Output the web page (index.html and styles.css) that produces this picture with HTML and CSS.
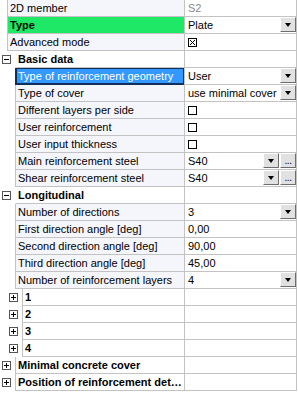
FILE: index.html
```html
<!DOCTYPE html>
<html lang="en">
<head>
  <meta charset="UTF-8">
  <title>2D member properties</title>
  <link rel="stylesheet" href="styles.css">
</head>
<body>
  <div class="grid">
    <div class="row lvl0">
      <div class="gutter"></div>
      <div class="name">2D member</div>
      <div class="value"><span class="readonly">S2</span></div>
    </div>
    <div class="row lvl0">
      <div class="gutter"></div>
      <div class="name type">Type</div>
      <div class="value"><span class="text">Plate</span><span class="drop"></span></div>
    </div>
    <div class="row lvl0">
      <div class="gutter"></div>
      <div class="name">Advanced mode</div>
      <div class="value">
        <svg class="check" width="9" height="9" viewBox="0 0 9 9"><rect x="0.5" y="0.5" width="8" height="8" fill="#fff" stroke="#000"/><path d="M2 2L7 7M7 2L2 7" stroke="#000" stroke-width="1"/></svg>
      </div>
    </div>

    <div class="row lvl1 group open">
      <div class="gutter"><span class="toggle minus"></span></div>
      <div class="name">Basic data</div>
      <div class="value"></div>
    </div>
    <div class="row lvl1">
      <div class="gutter"></div>
      <div class="name selected">Type of reinforcement geometry</div>
      <div class="value"><span class="text">User</span><span class="drop"></span></div>
    </div>
    <div class="row lvl1">
      <div class="gutter"></div>
      <div class="name">Type of cover</div>
      <div class="value"><span class="text">use minimal cover</span><span class="drop"></span></div>
    </div>
    <div class="row lvl1">
      <div class="gutter"></div>
      <div class="name">Different layers per side</div>
      <div class="value"><span class="box"></span></div>
    </div>
    <div class="row lvl1">
      <div class="gutter"></div>
      <div class="name">User reinforcement</div>
      <div class="value"><span class="box"></span></div>
    </div>
    <div class="row lvl1">
      <div class="gutter"></div>
      <div class="name">User input thickness</div>
      <div class="value"><span class="box"></span></div>
    </div>
    <div class="row lvl1">
      <div class="gutter"></div>
      <div class="name">Main reinforcement steel</div>
      <div class="value"><span class="text">S40</span><span class="drop"></span><span class="more">...</span></div>
    </div>
    <div class="row lvl1">
      <div class="gutter"></div>
      <div class="name">Shear reinforcement steel</div>
      <div class="value"><span class="text">S40</span><span class="drop"></span><span class="more">...</span></div>
    </div>

    <div class="row lvl1 group open">
      <div class="gutter"><span class="toggle minus"></span></div>
      <div class="name">Longitudinal</div>
      <div class="value"></div>
    </div>
    <div class="row lvl1">
      <div class="gutter"></div>
      <div class="name">Number of directions</div>
      <div class="value"><span class="text">3</span><span class="drop"></span></div>
    </div>
    <div class="row lvl1">
      <div class="gutter"></div>
      <div class="name">First direction angle [deg]</div>
      <div class="value"><span class="text">0,00</span></div>
    </div>
    <div class="row lvl1">
      <div class="gutter"></div>
      <div class="name">Second direction angle [deg]</div>
      <div class="value"><span class="text">90,00</span></div>
    </div>
    <div class="row lvl1">
      <div class="gutter"></div>
      <div class="name">Third direction angle [deg]</div>
      <div class="value"><span class="text">45,00</span></div>
    </div>
    <div class="row lvl1">
      <div class="gutter"></div>
      <div class="name">Number of reinforcement layers</div>
      <div class="value"><span class="text">4</span><span class="drop"></span></div>
    </div>

    <div class="row lvl2 group">
      <div class="gutter"><span class="toggle plus"></span></div>
      <div class="name">1</div>
      <div class="value"></div>
    </div>
    <div class="row lvl2 group">
      <div class="gutter"><span class="toggle plus"></span></div>
      <div class="name">2</div>
      <div class="value"></div>
    </div>
    <div class="row lvl2 group">
      <div class="gutter"><span class="toggle plus"></span></div>
      <div class="name">3</div>
      <div class="value"></div>
    </div>
    <div class="row lvl2 group">
      <div class="gutter"><span class="toggle plus"></span></div>
      <div class="name">4</div>
      <div class="value"></div>
    </div>

    <div class="row lvl1 group">
      <div class="gutter"><span class="toggle plus"></span></div>
      <div class="name">Minimal concrete cover</div>
      <div class="value"></div>
    </div>
    <div class="row lvl1 group">
      <div class="gutter"><span class="toggle plus"></span></div>
      <div class="name ellipsis">Position of reinforcement details</div>
      <div class="value"></div>
    </div>
  </div>
</body>
</html>
```

FILE: styles.css
```css
body {
  margin: 0;
  background: #fff;
  font-family: 'Liberation Sans', Arial, sans-serif;
  font-size: 11px;
  color: #000;
}
.grid {
  width: 297px;
}
.row {
  display: flex;
  height: 17px;
}
.gutter {
  position: relative;
  flex: none;
}
.lvl0 .gutter { width: 7px; }
.lvl1 .gutter { width: 15px; }
.lvl2 .gutter { width: 22px; }
.name {
  flex: 1;
  min-width: 0;
  box-sizing: border-box;
  border-left: 1px solid #c3c3c3;
  border-bottom: 1px solid #c3c3c3;
  background: #f5f5fc;
  padding-left: 2px;
  line-height: 16px;
  white-space: nowrap;
  overflow: hidden;
}
.name.type {
  background: #1fe866;
  font-weight: bold;
}
.name.selected {
  background: #3399ff;
  color: #fff;
  box-shadow: inset 0 0 0 1px #10305a;
  border-left-color: #10305a;
  border-bottom-color: #10305a;
}
.group .name {
  background: #fff;
  font-weight: bold;
}
.group.open .name {
  border-left-color: transparent;
}
.name.ellipsis {
  text-overflow: ellipsis;
}
.value {
  flex: none;
  width: 113px;
  box-sizing: border-box;
  border-left: 1px solid #c3c3c3;
  border-right: 1px solid #c3c3c3;
  border-bottom: 1px solid #c3c3c3;
  background: #fff;
  display: flex;
  align-items: flex-start;
  padding-left: 3px;
  line-height: 16px;
}
.value .text {
  flex: 1;
  white-space: nowrap;
  overflow: hidden;
}
.readonly {
  color: #8a8a8a;
}
.check {
  margin-top: 4px;
}
.box {
  width: 7px;
  height: 7px;
  border: 1px solid #000;
  margin-top: 4px;
}
.drop, .more {
  flex: none;
  position: relative;
  width: 16px;
  height: 15px;
  box-sizing: border-box;
  background: #e1e1e1;
  border-top: 1px solid #fff;
  border-left: 1px solid #fff;
  border-right: 1px solid #6d6d6d;
  border-bottom: 1px solid #6d6d6d;
}
.drop::after {
  content: '';
  position: absolute;
  left: 4px;
  top: 5px;
  border-left: 3.5px solid transparent;
  border-right: 3.5px solid transparent;
  border-top: 4px solid #000;
}
.more {
  margin-left: 1px;
  font-size: 10px;
  line-height: 14px;
  text-align: center;
  letter-spacing: -0.5px;
}
.toggle {
  position: absolute;
  top: 4px;
  width: 7px;
  height: 7px;
  border: 1px solid #555;
  background: #fff;
}
.lvl1 .toggle { left: 2px; }
.lvl2 .toggle { left: 9px; }
.toggle::before,
.toggle.plus::after {
  content: '';
  position: absolute;
  background: #000;
}
.toggle::before {
  left: 1px;
  top: 3px;
  width: 5px;
  height: 1px;
}
.toggle.plus::after {
  left: 3px;
  top: 1px;
  width: 1px;
  height: 5px;
}
```
